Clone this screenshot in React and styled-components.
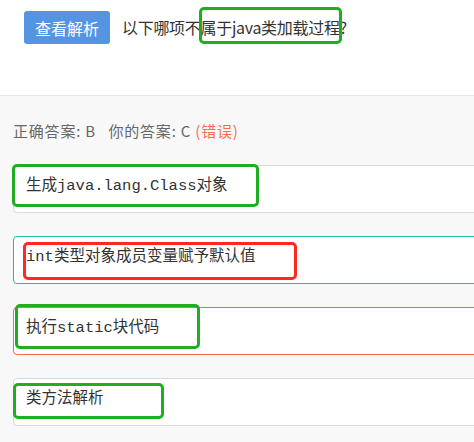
import React from 'react'
import styled, { createGlobalStyle } from 'styled-components'

const GlobalStyle = createGlobalStyle`
  html, body {
    margin: 0;
    padding: 0;
    background: #f8f8f8;
    overflow: hidden;
  }
  body {
    font-family: "Noto Sans", "Noto Sans CJK SC", sans-serif;
  }
`

const Page = styled.div`
  position: relative;
  width: 474px;
  height: 442px;
  overflow: hidden;
  background: #f8f8f8;
`

const Header = styled.div`
  height: 96px;
  background: #fff;
  border-bottom: 1px solid #e6e6e6;
  box-sizing: border-box;
  padding: 11px 0 0 24px;
  display: flex;
  align-items: flex-start;
  gap: 12px;
`

const ViewButton = styled.button`
  width: 86px;
  height: 33px;
  border: none;
  border-radius: 3px;
  background: #5494e2;
  color: #fff;
  font-family: "Noto Sans CJK SC", sans-serif;
  font-size: 16px;
  padding: 0;
  cursor: pointer;
`

const Question = styled.span`
  font-family: "Noto Sans CJK SC", sans-serif;
  font-size: 16px;
  line-height: 33px;
  color: #333;
  letter-spacing: -0.3px;
`

const Body = styled.div`
  padding: 25px 0 0 13px;
`

const AnswerLine = styled.div`
  font-family: "Noto Sans CJK SC", sans-serif;
  font-size: 15px;
  line-height: 20px;
  color: #666;
  margin-bottom: 24px;
  white-space: pre;
  letter-spacing: 0.8px;
`

const Wrong = styled.span`
  color: #ff6b4f;
`

const borders = {
  normal: '#d9d9d9',
  correct: '#1abc9c',
  wrong: '#f7684b'
}

const Option = styled.div`
  width: 620px;
  height: 48px;
  box-sizing: border-box;
  border: 1px solid ${p => borders[p.$state]};
  border-radius: 4px;
  background: #fff;
  padding: 9px 0 0 12px;
  margin-bottom: 23px;
  font-family: "Liberation Mono", "Noto Sans CJK SC", monospace;
  font-size: 15.5px;
  line-height: 22px;
  color: #333;
`

const Mark = styled.div`
  position: absolute;
  box-sizing: border-box;
  border: 3px solid ${p => (p.$red ? '#ff2a1f' : '#1fae22')};
  border-radius: 5px;
  pointer-events: none;
`

const options = [
  { text: '生成java.lang.Class对象', state: 'normal' },
  { text: 'int类型对象成员变量赋予默认值', state: 'correct' },
  { text: '执行static块代码', state: 'wrong' },
  { text: '类方法解析', state: 'normal' }
]

const marks = [
  { left: 199, top: 7, width: 143, height: 37 },
  { left: 12, top: 164, width: 247, height: 43 },
  { left: 23, top: 242, width: 274, height: 38, red: true },
  { left: 15, top: 304, width: 185, height: 45 },
  { left: 13, top: 383, width: 151, height: 36 }
]

export default function App() {
  return (
    <Page>
      <GlobalStyle />
      <Header>
        <ViewButton>查看解析</ViewButton>
        <Question>以下哪项不属于java类加载过程?</Question>
      </Header>
      <Body>
        <AnswerLine>
          正确答案: B   你的答案: C <Wrong>(错误)</Wrong>
        </AnswerLine>
        {options.map(o => (
          <Option key={o.text} $state={o.state}>{o.text}</Option>
        ))}
      </Body>
      {marks.map((m, i) => (
        <Mark
          key={i}
          $red={m.red}
          style={{ left: m.left, top: m.top, width: m.width, height: m.height }}
        />
      ))}
    </Page>
  )
}
